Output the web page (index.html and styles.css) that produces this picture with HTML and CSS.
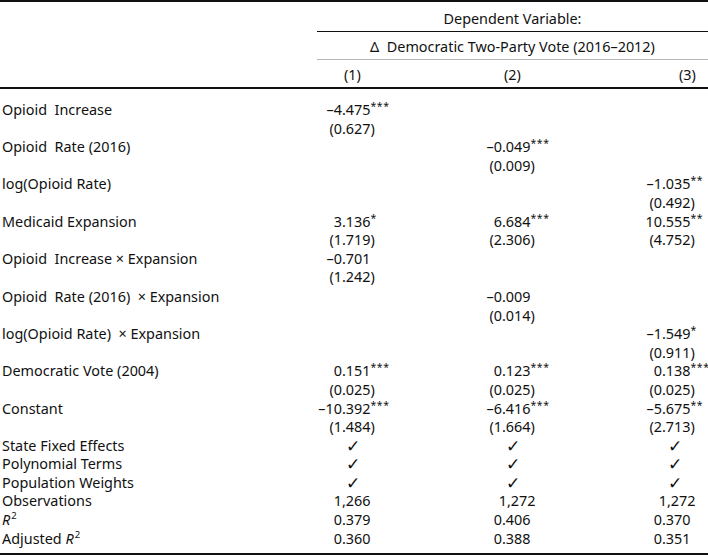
FILE: index.html
```html
<!DOCTYPE html>
<html>
<head>
<meta charset="utf-8">
<link rel="stylesheet" href="styles.css">
</head>
<body>
<div class="table">
  <div class="head head1">
    <div class="lab"></div>
    <div class="span">Dependent Variable:</div>
  </div>
  <div class="head head2">
    <div class="lab"></div>
    <div class="span">Δ&nbsp; Democratic Two-Party Vote (2016–2012)</div>
  </div>
  <div class="head head3">
    <div class="lab"></div>
    <div class="colh">(1)</div>
    <div class="colh">(2)</div>
    <div class="colh c3">(3)</div>
  </div>

  <div class="body">
    <div class="row"><div class="lab">Opioid&nbsp; Increase</div>
      <div class="num"><span class="i">–4</span><span class="f">.475<sup>***</sup></span></div><div></div><div></div></div>
    <div class="row"><div class="lab"></div>
      <div class="num"><span class="i">(0</span><span class="f">.627)</span></div><div></div><div></div></div>

    <div class="row"><div class="lab">Opioid&nbsp; Rate (2016)</div>
      <div></div><div class="num"><span class="i">–0</span><span class="f">.049<sup>***</sup></span></div><div></div></div>
    <div class="row"><div class="lab"></div>
      <div></div><div class="num"><span class="i">(0</span><span class="f">.009)</span></div><div></div></div>

    <div class="row"><div class="lab">log(Opioid Rate)</div>
      <div></div><div></div><div class="num"><span class="i">–1</span><span class="f">.035<sup>**</sup></span></div></div>
    <div class="row"><div class="lab"></div>
      <div></div><div></div><div class="num"><span class="i">(0</span><span class="f">.492)</span></div></div>

    <div class="row"><div class="lab">Medicaid Expansion</div>
      <div class="num"><span class="i">3</span><span class="f">.136<sup>*</sup></span></div>
      <div class="num"><span class="i">6</span><span class="f">.684<sup>***</sup></span></div>
      <div class="num"><span class="i">10</span><span class="f">.555<sup>**</sup></span></div></div>
    <div class="row"><div class="lab"></div>
      <div class="num"><span class="i">(1</span><span class="f">.719)</span></div>
      <div class="num"><span class="i">(2</span><span class="f">.306)</span></div>
      <div class="num"><span class="i">(4</span><span class="f">.752)</span></div></div>

    <div class="row"><div class="lab">Opioid&nbsp; Increase × Expansion</div>
      <div class="num"><span class="i">–0</span><span class="f">.701</span></div><div></div><div></div></div>
    <div class="row"><div class="lab"></div>
      <div class="num"><span class="i">(1</span><span class="f">.242)</span></div><div></div><div></div></div>

    <div class="row gap"><div class="lab">Opioid&nbsp; Rate (2016)&nbsp; × Expansion</div>
      <div></div><div class="num"><span class="i">–0</span><span class="f">.009</span></div><div></div></div>
    <div class="row"><div class="lab"></div>
      <div></div><div class="num"><span class="i">(0</span><span class="f">.014)</span></div><div></div></div>

    <div class="row"><div class="lab">log(Opioid Rate)&nbsp; × Expansion</div>
      <div></div><div></div><div class="num"><span class="i">–1</span><span class="f">.549<sup>*</sup></span></div></div>
    <div class="row"><div class="lab"></div>
      <div></div><div></div><div class="num"><span class="i">(0</span><span class="f">.911)</span></div></div>

    <div class="row"><div class="lab">Democratic Vote (2004)</div>
      <div class="num"><span class="i">0</span><span class="f">.151<sup>***</sup></span></div>
      <div class="num"><span class="i">0</span><span class="f">.123<sup>***</sup></span></div>
      <div class="num"><span class="i">0</span><span class="f">.138<sup>***</sup></span></div></div>
    <div class="row"><div class="lab"></div>
      <div class="num"><span class="i">(0</span><span class="f">.025)</span></div>
      <div class="num"><span class="i">(0</span><span class="f">.025)</span></div>
      <div class="num"><span class="i">(0</span><span class="f">.025)</span></div></div>

    <div class="row"><div class="lab">Constant</div>
      <div class="num"><span class="i">–10</span><span class="f">.392<sup>***</sup></span></div>
      <div class="num"><span class="i">–6</span><span class="f">.416<sup>***</sup></span></div>
      <div class="num"><span class="i">–5</span><span class="f">.675<sup>**</sup></span></div></div>
    <div class="row"><div class="lab"></div>
      <div class="num"><span class="i">(1</span><span class="f">.484)</span></div>
      <div class="num"><span class="i">(1</span><span class="f">.664)</span></div>
      <div class="num"><span class="i">(2</span><span class="f">.713)</span></div></div>

    <div class="row"><div class="lab">State Fixed Effects</div>
      <div class="chk">✓</div><div class="chk">✓</div><div class="chk c3">✓</div></div>
    <div class="row"><div class="lab">Polynomial Terms</div>
      <div class="chk">✓</div><div class="chk">✓</div><div class="chk c3">✓</div></div>
    <div class="row"><div class="lab">Population Weights</div>
      <div class="chk">✓</div><div class="chk">✓</div><div class="chk c3">✓</div></div>
    <div class="row"><div class="lab">Observations</div>
      <div class="num"><span class="i">1</span><span class="f">,266</span></div>
      <div class="num obs"><span class="i">1</span><span class="f">,272</span></div>
      <div class="num obs"><span class="i">1</span><span class="f">,272</span></div></div>
    <div class="row"><div class="lab"><i>R</i><sup class="sq">2</sup></div>
      <div class="num"><span class="i">0</span><span class="f">.379</span></div>
      <div class="num"><span class="i">0</span><span class="f">.406</span></div>
      <div class="num"><span class="i">0</span><span class="f">.370</span></div></div>
    <div class="row"><div class="lab">Adjusted <i>R</i><sup class="sq">2</sup></div>
      <div class="num"><span class="i">0</span><span class="f">.360</span></div>
      <div class="num"><span class="i">0</span><span class="f">.388</span></div>
      <div class="num"><span class="i">0</span><span class="f">.351</span></div></div>
  </div>
</div>
</body>
</html>
```

FILE: styles.css
```css
html, body {
  margin: 0;
  padding: 0;
  background: #fff;
}

body {
  font-family: "Noto Sans", "DejaVu Sans", sans-serif;
  font-size: 14.4px;
  color: #111;
}

.table {
  width: 708px;
  border-top: 2px solid #111;
}

.head,
.row {
  display: grid;
  grid-template-columns: 317px 160px 160px 71px;
}

.head1 {
  height: 30px;
  align-items: center;
}

.head1 .span {
  grid-column: 2 / 5;
  text-align: center;
  align-self: stretch;
  display: flex;
  align-items: center;
  justify-content: center;
  border-bottom: 1px solid #111;
  padding-top: 3px;
}

.head2 .span {
  grid-column: 2 / 5;
  height: 28px;
  display: flex;
  align-items: center;
  justify-content: center;
  border-bottom: 1px solid #b5b5b5;
  padding-top: 1px;
  box-sizing: border-box;
}

.head3 {
  height: 26px;
  align-items: center;
  border-bottom: 2px solid #111;
  padding-top: 1px;
}

.colh {
  padding-left: 27px;
}

.colh.c3 {
  padding-left: 42px;
}

.body {
  padding-top: 12px;
  padding-bottom: 5px;
  border-bottom: 2px solid #111;
}

.row {
  height: 18.6px;
  line-height: 18.6px;
  white-space: nowrap;
}

.row.gap {
  margin-top: 1px;
}

.lab {
  padding-left: 2px;
}

.num .i {
  display: inline-block;
  width: 25px;
  text-align: right;
}

.num.obs {
  padding-left: 5px;
}

sup {
  font-size: 10.5px;
  line-height: 0;
  vertical-align: 5px;
  letter-spacing: 0.5px;
}

sup.sq {
  vertical-align: 6px;
  margin-left: 1px;
  font-size: 9.5px;
}

.chk {
  font-family: "DejaVu Sans", sans-serif;
  font-size: 17px;
  font-weight: bold;
  padding-left: 29px;
}

.chk.c3 {
  padding-left: 31px;
}
```
